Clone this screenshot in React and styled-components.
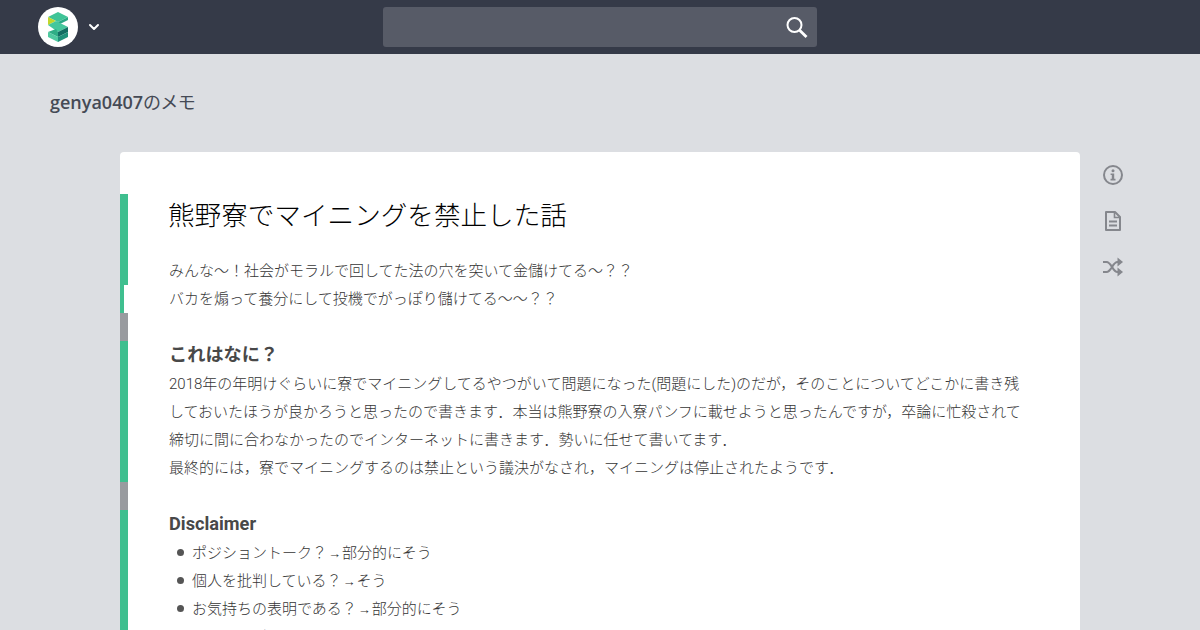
import styled, { createGlobalStyle } from "styled-components"
import { ChevronDown } from "lucide-react"

const GlobalStyle = createGlobalStyle`
  html, body {
    margin: 0;
    height: 630px;
    overflow: hidden;
    background: #dcdee2;
    font-family: Roboto, "Noto Sans CJK JP", sans-serif;
  }
`

const Header = styled.header`
  height: 54px;
  background: #353a48;
  display: grid;
  grid-template-columns: 1fr 434px 1fr;
  align-items: center;
`
const Brand = styled.div`
  display: flex;
  align-items: center;
  padding-left: 38px;
  color: #fff;
`
const LogoCircle = styled.div`
  width: 40px;
  height: 40px;
  border-radius: 50%;
  background: #fff;
  display: flex;
  align-items: center;
  justify-content: center;
  margin-right: 8px;
`
const SearchBox = styled.div`
  height: 40px;
  background: #575b67;
  border-radius: 3px;
  display: flex;
  align-items: center;
  justify-content: flex-end;
  padding-right: 9px;
`
const BlogTitle = styled.h2`
  margin: 0;
  padding: 36px 0 0 50px;
  height: 62px;
  font: 600 18px/24px "Open Sans", "Noto Sans CJK JP", sans-serif;
  color: #454a55;
`
const Kana = styled.span`
  font-weight: 400;
  letter-spacing: -0.7px;
`
const Main = styled.div`
  display: flex;
  align-items: flex-start;
  padding-left: 120px;
`
const Card = styled.article`
  width: 960px;
  background: #fff;
  border-radius: 4px;
  padding-top: 42px;
`
const Line = styled.div`
  height: 28px;
  line-height: 28px;
  padding-left: 41px;
  border-left: 8px solid ${p => (p.$mark === "gray" ? "#999b9f" : "#3fbf8f")};
  font-size: 15px;
  font-weight: 300;
  color: #363636;
  white-space: nowrap;
  position: relative;
`
const NarrowLine = styled(Line)`
  border-left: 4px solid #3fbf8f;
  padding-left: 45px;
`
const Title = styled(Line)`
  height: 42px;
  line-height: 44px;
  padding-bottom: 21px;
  padding-left: 40px;
  font-size: 26.6px;
  color: #000;
`
const Heading = styled(Line)`
  height: 29px;
  line-height: 28px;
  font-size: 18.2px;
  font-weight: 700;
  color: #484848;
`
const Item = styled(Line)`
  padding-left: 64px;
  &::before {
    content: "";
    position: absolute;
    left: 49px;
    top: 10px;
    width: 7px;
    height: 7px;
    border-radius: 50%;
    background: #555;
  }
`
const Arrow = styled.span`
  display: inline-block;
  width: 15px;
  text-align: center;
  font-size: 13px;
  font-family: "Liberation Sans", sans-serif;
`
const Side = styled.aside`
  display: flex;
  flex-direction: column;
  padding-left: 21px;
  color: #85878d;
`
const SideIcon = styled.div`
  width: 24px;
  height: 46px;
  display: flex;
  align-items: center;
  justify-content: center;
`

const Logo = () => (
  <svg width="20" height="30" viewBox="0 0 20 30">
    <polygon points="0,5 10,0 20,5 10,10" fill="#3fc497" />
    <polygon points="10,10 20,5 20,8 12,12 8,9" fill="#2aa985" />
    <polygon points="0,5 8,9 0,13" fill="#c3d62c" />
    <polygon points="0,13 8,9 20,15 10,20" fill="#45c79c" />
    <polygon points="10,20 20,15 20,20 10,25" fill="#136e63" />
    <polygon points="0,20 8,17 10,20 10,25" fill="#2fae86" />
    <polygon points="0,20 10,25 10,30 0,25" fill="#4fcaa0" />
    <polygon points="10,25 20,20 20,25 10,30" fill="#1f917a" />
  </svg>
)

const SearchIcon = () => (
  <svg width="24" height="24" viewBox="0 0 24 24" fill="none" stroke="#fff" strokeWidth="2">
    <circle cx="10.5" cy="10" r="7" />
    <path d="M15.6 15.2 L22.5 22" strokeWidth="2.8" />
  </svg>
)

const InfoIcon = () => (
  <svg width="22" height="22" viewBox="0 0 22 22">
    <circle cx="11" cy="11" r="9" fill="none" stroke="currentColor" strokeWidth="2" />
    <circle cx="11" cy="6.8" r="1.5" fill="currentColor" />
    <path d="M8.6 9.4h3.6v5.4h1.3v1.6H8.5v-1.6h1.3v-3.8H8.6z" fill="currentColor" />
  </svg>
)

const FileIcon = () => (
  <svg width="18" height="22" viewBox="0 0 18 22" fill="none" stroke="currentColor" strokeWidth="2">
    <path d="M2 2h9l5 5v13H2z" strokeLinejoin="round" />
    <path d="M10.5 2v5.5H16" strokeWidth="1.6" />
    <path d="M5 11.5h8M5 15.5h8" />
  </svg>
)

const ShuffleIcon = () => (
  <svg width="22" height="22" viewBox="0 0 22 22">
    <path
      d="M1 6h3.5c5 0 6 10 11 10h1.5M1 16h3.5c5 0 6-10 11-10h1.5"
      fill="none"
      stroke="currentColor"
      strokeWidth="2.2"
    />
    <polygon points="15.5,1.5 21,6 15.5,10.5" fill="currentColor" />
    <polygon points="15.5,11.5 21,16 15.5,20.5" fill="currentColor" />
  </svg>
)

export default function App() {
  return (
    <>
      <GlobalStyle />
      <Header>
        <Brand>
          <LogoCircle><Logo /></LogoCircle>
          <ChevronDown size={16} strokeWidth={3} />
        </Brand>
        <SearchBox><SearchIcon /></SearchBox>
      </Header>
      <BlogTitle>genya0407<Kana>のメモ</Kana></BlogTitle>
      <Main>
        <Card>
          <Title>熊野寮でマイニングを禁止した話</Title>
          <Line>みんな〜！社会がモラルで回してた法の穴を突いて金儲けてる〜？？</Line>
          <NarrowLine>バカを煽って養分にして投機でがっぽり儲けてる〜〜？？</NarrowLine>
          <Line $mark="gray" />
          <Heading>これはなに？</Heading>
          <Line>2018年の年明けぐらいに寮でマイニングしてるやつがいて問題になった(問題にした)のだが，そのことについてどこかに書き残</Line>
          <Line>しておいたほうが良かろうと思ったので書きます．本当は熊野寮の入寮パンフに載せようと思ったんですが，卒論に忙殺されて</Line>
          <Line>締切に間に合わなかったのでインターネットに書きます．勢いに任せて書いてます．</Line>
          <Line>最終的には，寮でマイニングするのは禁止という議決がなされ，マイニングは停止されたようです．</Line>
          <Line $mark="gray" />
          <Heading>Disclaimer</Heading>
          <Item>ポジショントーク？<Arrow>→</Arrow>部分的にそう</Item>
          <Item>個人を批判している？<Arrow>→</Arrow>そう</Item>
          <Item>お気持ちの表明である？<Arrow>→</Arrow>部分的にそう</Item>
          <Item>マイニングはよくない？<Arrow>→</Arrow>そう</Item>
        </Card>
        <Side>
          <SideIcon><InfoIcon /></SideIcon>
          <SideIcon><FileIcon /></SideIcon>
          <SideIcon><ShuffleIcon /></SideIcon>
        </Side>
      </Main>
    </>
  )
}
